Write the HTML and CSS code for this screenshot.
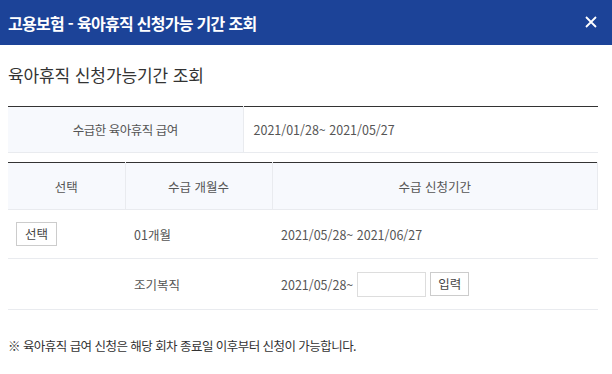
FILE: index.html
```html
<!DOCTYPE html>
<html lang="ko">
<head>
<meta charset="utf-8">
<title>고용보험 - 육아휴직 신청가능 기간 조회</title>
<link rel="stylesheet" href="styles.css">
</head>
<body>
<div class="popup">
  <header class="pop-head">
    <h1 class="pop-title">고용보험 - 육아휴직 신청가능 기간 조회</h1>
    <button class="close" type="button" aria-label="닫기">
      <svg width="12" height="12" viewBox="0 0 12 12"><path d="M1 1 L11 11 M11 1 L1 11" stroke="#fff" stroke-width="1.8" fill="none"/></svg>
    </button>
  </header>
  <main class="pop-body">
    <h2 class="sub-title">육아휴직 신청가능기간 조회</h2>
    <table class="tbl tbl-info">
      <tr>
        <th class="info-th">수급한 육아휴직 급여</th>
        <td class="info-td">2021/01/28~ 2021/05/27</td>
      </tr>
    </table>
    <table class="tbl tbl-list">
      <thead>
        <tr class="head-row">
          <th class="col-sel">선택</th>
          <th class="col-mon">수급 개월수</th>
          <th class="col-per">수급 신청기간</th>
        </tr>
      </thead>
      <tbody>
        <tr class="row1">
          <td class="cell-sel"><button class="btn" type="button">선택</button></td>
          <td class="cell">01개월</td>
          <td class="cell">2021/05/28~ 2021/06/27</td>
        </tr>
        <tr class="row2">
          <td class="cell-sel"></td>
          <td class="cell">조기복직</td>
          <td class="cell"><span class="date-from">2021/05/28~</span><input class="date-in" type="text"><button class="btn btn-in" type="button">입력</button></td>
        </tr>
      </tbody>
    </table>
    <p class="note">※ 육아휴직 급여 신청은 해당 회차 종료일 이후부터 신청이 가능합니다.</p>
  </main>
</div>
</body>
</html>
```

FILE: styles.css
```css
* { box-sizing: border-box; }
html, body { margin: 0; padding: 0; background: #fff; }
body {
  font-family: "Noto Sans CJK KR", "Noto Sans", sans-serif;
  color: #444;
  width: 612px;
  height: 374px;
  overflow: hidden;
}
.pop-head {
  height: 45px;
  background: #1c4398;
  display: flex;
  align-items: center;
  justify-content: space-between;
  padding: 0 15px 0 8px;
}
.pop-title {
  margin: 0;
  font-size: 16px;
  font-weight: bold;
  color: #fff;
  letter-spacing: -0.7px;
  line-height: 20px;
}
.close {
  border: 0;
  background: transparent;
  padding: 0;
  width: 12px;
  height: 12px;
  display: flex;
  margin-top: -2px;
}
.pop-body {
  padding: 0 14px 0 8px;
}
.sub-title {
  margin: 18px 0 19px;
  font-size: 17px;
  font-weight: normal;
  color: #333;
  line-height: 24px;
  letter-spacing: -0.1px;
}
.tbl {
  width: 100%;
  border-collapse: collapse;
  border-top: 1px solid #333;
  font-size: 12.5px;
  color: #555;
}
.tbl th, .tbl td {
  padding: 0;
  font-weight: normal;
}
.info-th {
  width: 235px;
  height: 46px;
  background: #f7f9fd;
  border-right: 1px solid #e9ebef;
  border-bottom: 1px solid #e9ebef;
  text-align: center;
  letter-spacing: -0.5px;
}
.info-td {
  border-bottom: 1px solid #e9ebef;
  padding-left: 10px !important;
  text-align: left;
}
.tbl-list { margin-top: 9px; }
.head-row th {
  height: 47px;
  background: #f7f9fd;
  border-bottom: 1px solid #e9ebef;
  text-align: center;
}
.col-sel { width: 117px; border-right: 1px solid #e9ebef; }
.col-mon { width: 147px; border-right: 1px solid #e9ebef; }
.col-per { border-right: 1px solid #e9ebef; }
.tbl-list tbody td { border-bottom: 1px solid #e9ebef; }
.row1 td { height: 49px; }
.row2 td { height: 51px; }
.cell { padding-left: 9px !important; text-align: left; }
.cell-sel { padding-left: 8px !important; }
.btn {
  font-family: inherit;
  font-size: 12.5px;
  color: #444;
  background: #fff;
  border: 1px solid #ccc;
  height: 24px;
  width: 41px;
  padding: 0;
  line-height: 20px;
}
.date-from { vertical-align: middle; }
.date-in {
  width: 69px;
  height: 25px;
  border: 1px solid #ddd;
  margin: 0 4px 0 4px;
  padding: 0;
  vertical-align: middle;
}
.btn-in { width: 39px; vertical-align: middle; }
.note {
  margin: 26px 0 0;
  font-size: 12.5px;
  line-height: 20px;
  color: #333;
  letter-spacing: -0.55px;
}
```
